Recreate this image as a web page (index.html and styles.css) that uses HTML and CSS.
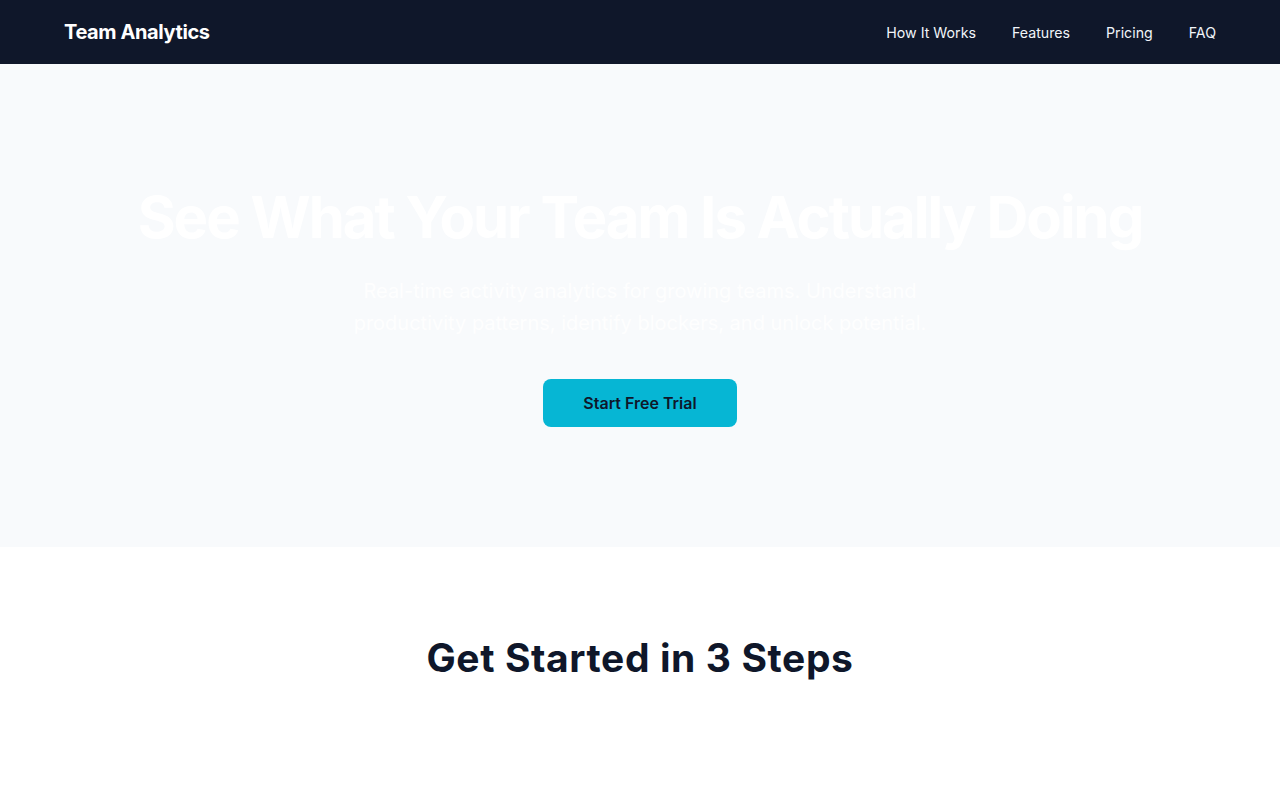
FILE: index.html
```html
<!DOCTYPE html>
<html lang="en">
<head>
<meta charset="utf-8">
<title>Team Analytics</title>
<link rel="stylesheet" href="styles.css">
</head>
<body>
<header class="nav">
  <div class="logo">Team Analytics</div>
  <nav class="links">
    <a href="#how">How It Works</a>
    <a href="#features">Features</a>
    <a href="#pricing">Pricing</a>
    <a href="#faq">FAQ</a>
  </nav>
</header>
<section class="hero">
  <h1 class="hero-title">See What Your Team Is Actually Doing</h1>
  <p class="hero-sub">Real-time activity analytics for growing teams. Understand productivity patterns, identify blockers, and unlock potential.</p>
  <a class="cta" href="#trial">Start Free Trial</a>
</section>
<section class="steps" id="how">
  <h2 class="steps-title">Get Started in 3 Steps</h2>
</section>
</body>
</html>
```
FILE: styles.css
```css
* { box-sizing: border-box; }
html, body { margin: 0; padding: 0; }
body {
  font-family: Inter, "Noto Sans", sans-serif;
  background: #ffffff;
  color: #0f172a;
}
.nav {
  height: 64px;
  background: #0f172a;
  display: flex;
  align-items: center;
  justify-content: space-between;
  padding: 0 64px;
}
.logo {
  font-family: Inter, sans-serif;
  font-weight: 700;
  font-size: 20px;
  color: #ffffff;
  letter-spacing: -0.4px;
}
.links {
  display: flex;
  gap: 36px;
}
.links a {
  color: #f1f5f9;
  text-decoration: none;
  font-size: 14.2px;
  font-weight: 400;
}
.hero {
  background: #f8fafc;
  padding: 120px 64px;
  display: flex;
  flex-direction: column;
  align-items: center;
  text-align: center;
}
.hero-title {
  margin: 0 0 24px;
  font-family: Inter, sans-serif;
  font-weight: 700;
  font-size: 58px;
  line-height: 67px;
  color: #ffffff;
  letter-spacing: -2px;
}
.hero-sub {
  margin: 0 0 40px;
  max-width: 600px;
  font-size: 20px;
  line-height: 32px;
  color: rgba(255, 255, 255, 0.9);
}
.cta {
  display: inline-flex;
  align-items: center;
  justify-content: center;
  width: 194px;
  height: 48px;
  background: #06b6d4;
  color: #0f172a;
  border-radius: 8px;
  font-size: 16px;
  font-weight: 600;
  text-decoration: none;
}
.steps {
  padding: 87px 64px 80px;
  text-align: center;
}
.steps-title {
  margin: 0;
  font-family: Inter, sans-serif;
  font-weight: 700;
  font-size: 39px;
  line-height: 48px;
  letter-spacing: 0.6px;
  color: #0f172a;
}
```
